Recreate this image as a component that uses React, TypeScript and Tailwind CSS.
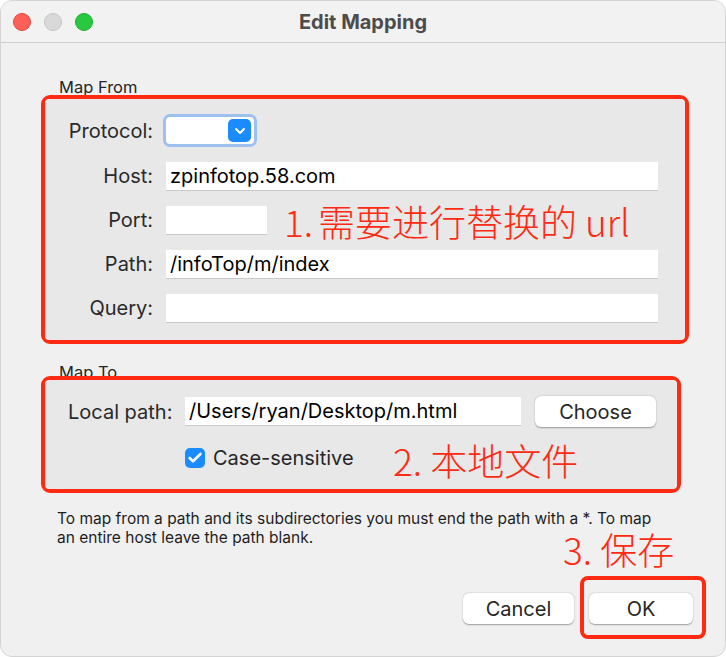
import { ChevronDown, Check } from "lucide-react";

const font = { fontFamily: 'Inter, "Noto Sans CJK SC", "Liberation Sans", sans-serif' };
const noteFont = { fontFamily: '"Noto Sans CJK SC", "Noto Sans", sans-serif' };

function Field({ value = "", className = "" }: { value?: string; className?: string }) {
  return (
    <div className={`h-[29px] bg-white border-b border-[#c8c8c8] flex items-center px-[4px] text-[20px] text-black ${className}`}>
      {value}
    </div>
  );
}

function Row({ label, children }: { label: string; children: React.ReactNode }) {
  return (
    <div className="flex items-center">
      <div className="w-[121px] pr-[13px] text-right text-[20px] text-[#2a2a2a]">{label}</div>
      {children}
    </div>
  );
}

function Button({ label, className = "" }: { label: string; className?: string }) {
  return (
    <div className={`h-[31px] bg-white rounded-[6px] shadow-[0_0.5px_1.5px_rgba(0,0,0,0.35)] flex items-center justify-center text-[20px] text-[#262626] ${className}`}>
      {label}
    </div>
  );
}

export default function App() {
  return (
    <div className="w-[726px] h-[657px] bg-white" style={font}>
      <div className="relative w-full h-full rounded-[12px] bg-[#f0f0f0] border border-[#d4d4d4] overflow-hidden flex flex-col">
        {/* title bar */}
        <div className="h-[42px] shrink-0 flex items-center border-b border-[#cfcfcf] bg-[#f2f2f2] relative">
          <div className="flex gap-[13px] pl-[12px]">
            <span className="w-[18px] h-[18px] rounded-full bg-[#fe5f57] border border-[#e2463f]" />
            <span className="w-[18px] h-[18px] rounded-full bg-[#d9d9d9] border border-[#c6c6c6]" />
            <span className="w-[18px] h-[18px] rounded-full bg-[#28c840] border border-[#1fae33]" />
          </div>
          <div className="absolute inset-0 flex items-center justify-center text-[20px] font-bold text-[#4c4c4c] pointer-events-none">
            Edit Mapping
          </div>
        </div>

        <div className="flex flex-col pl-[40px] pr-[36px]">
          <div className="mt-[34px] ml-[18px] text-[16.5px] text-[#262626] leading-[20px]">Map From</div>
          <div className="mt-[-2px] border-[4px] border-[#ff2a12] rounded-[9px]">
            <div className="bg-[#e8e8e8] rounded-[4px] pt-[15px] pb-[17px] pr-[27px] flex flex-col gap-[14px]">
              <Row label="Protocol:">
                <div className="ml-[-3px] w-[94px] h-[33px] rounded-[7px] border-[3px] border-[#9ec0ee] bg-white flex items-center justify-end pr-[3px]">
                  <div className="w-[23px] h-[23px] rounded-[5px] bg-[#1a8cff] flex items-center justify-center">
                    <ChevronDown size={16} strokeWidth={3} color="white" />
                  </div>
                </div>
              </Row>
              <Row label="Host:">
                <Field value="zpinfotop.58.com" className="flex-1" />
              </Row>
              <Row label="Port:">
                <Field className="w-[101px]" />
              </Row>
              <Row label="Path:">
                <Field value="/infoTop/m/index" className="flex-1" />
              </Row>
              <Row label="Query:">
                <Field className="flex-1" />
              </Row>
            </div>
          </div>

          <div className="mt-[18px] ml-[18px] text-[16.5px] text-[#262626] leading-[20px] h-[14px] overflow-visible">Map To</div>
          <div className="mr-[8px] border-[4px] border-[#ff2a12] rounded-[9px]">
            <div className="bg-[#e8e8e8] rounded-[4px] pt-[16px] pb-[16px] pr-[17px] flex flex-col gap-[16px]">
              <div className="flex items-center">
                <div className="pl-[23px] w-[140px] text-[20px] text-[#2a2a2a]">Local path:</div>
                <Field value="/Users/ryan/Desktop/m.html" className="w-[336px]" />
                <Button label="Choose" className="ml-[14px] w-[121px]" />
              </div>
              <div className="flex items-center pl-[140px]">
                <div className="w-[20px] h-[20px] rounded-[5px] bg-[#1a8cff] flex items-center justify-center">
                  <Check size={16} strokeWidth={4} color="white" />
                </div>
                <span className="ml-[8px] text-[20px] text-[#262626]">Case-sensitive</span>
              </div>
            </div>
          </div>

          <div className="mt-[16px] ml-[16px] text-[15.5px] leading-[19px] text-[#1e1e1e]">
            To map from a path and its subdirectories you must end the path with a *. To map
            <br />
            an entire host leave the path blank.
          </div>
        </div>

        {/* bottom buttons */}
        <div className="mt-auto mb-[32px] flex justify-end items-center pr-[32px] gap-[15px]">
          <Button label="Cancel" className="w-[111px]" />
          <Button label="OK" className="w-[104px]" />
        </div>

        {/* annotations */}
        <div className="absolute left-[283px] top-[196px] flex items-baseline text-[37px] leading-[48px] font-light text-[#ff2a12]" style={noteFont}>
          <span>1.</span>
          <span className="ml-[5px]">需要进行替换的</span>
          <span className="ml-[8px]">url</span>
        </div>
        <div className="absolute left-[392px] top-[435px] text-[37px] leading-[48px] font-light text-[#ff2a12]" style={noteFont}>2. 本地文件</div>
        <div className="absolute left-[562px] top-[524px] text-[37px] leading-[48px] font-light text-[#ff2a12]" style={noteFont}>3. 保存</div>
        <div className="absolute left-[579px] top-[575px] w-[126px] h-[63px] border-[4px] border-[#ff2a12] rounded-[8px]" />
      </div>
    </div>
  );
}
